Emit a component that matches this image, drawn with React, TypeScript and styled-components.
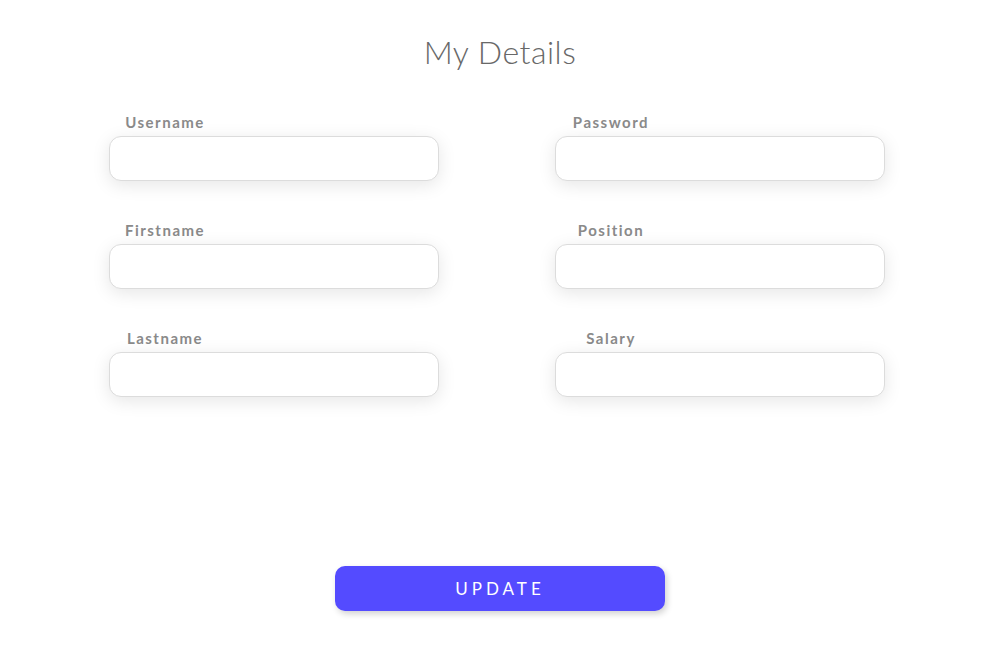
import React from 'react';
import styled, { createGlobalStyle } from 'styled-components';

const GlobalStyle = createGlobalStyle`
  html, body {
    margin: 0;
    padding: 0;
    background: #ffffff;
  }
  body {
    font-family: 'Lato', 'Open Sans', sans-serif;
  }
`;

const Page = styled.div`
  width: 1000px;
  height: 650px;
  display: flex;
  flex-direction: column;
  align-items: center;
  padding-top: 32px;
  box-sizing: border-box;
`;

const Title = styled.h1`
  margin: 0 0 40px;
  font-size: 32px;
  line-height: 40px;
  font-weight: 300;
  color: #686868;
  letter-spacing: 0.5px;
`;

const Form = styled.form`
  display: grid;
  grid-template-columns: 330px 330px;
  column-gap: 116px;
  row-gap: 39px;
  margin-right: 6px;
`;

const Field = styled.div`
  display: flex;
  flex-direction: column;
  gap: 4px;
`;

const Label = styled.label`
  width: 112px;
  text-align: center;
  font-size: 15px;
  line-height: 20px;
  font-weight: 700;
  color: #8a8a8a;
  letter-spacing: 1.5px;
`;

const Input = styled.input`
  width: 330px;
  height: 45px;
  box-sizing: border-box;
  border: 1px solid #dcdcdc;
  border-radius: 12px;
  background: #fff;
  box-shadow: 0 4px 18px rgba(0, 0, 0, 0.1);
  outline: none;
  padding: 0 14px;
  font-size: 15px;
  font-family: inherit;
  color: #555;
`;

const Button = styled.button`
  margin-top: 169px;
  width: 330px;
  height: 45px;
  border: none;
  border-radius: 10px;
  background: #544bff;
  color: #fff;
  font-family: inherit;
  font-size: 17px;
  letter-spacing: 4px;
  box-shadow: 2px 3px 6px rgba(0, 0, 0, 0.18);
  cursor: pointer;
`;

const fields = ['Username', 'Password', 'Firstname', 'Position', 'Lastname', 'Salary'];

const App = () => {
  return (
    <>
      <GlobalStyle />
      <Page>
        <Title>My Details</Title>
        <Form onSubmit={(e) => e.preventDefault()}>
          {fields.map((name) => (
            <Field key={name}>
              <Label htmlFor={name}>{name}</Label>
              <Input id={name} type={name === 'Password' ? 'password' : 'text'} />
            </Field>
          ))}
        </Form>
        <Button type="button">UPDATE</Button>
      </Page>
    </>
  );
};

export default App;
